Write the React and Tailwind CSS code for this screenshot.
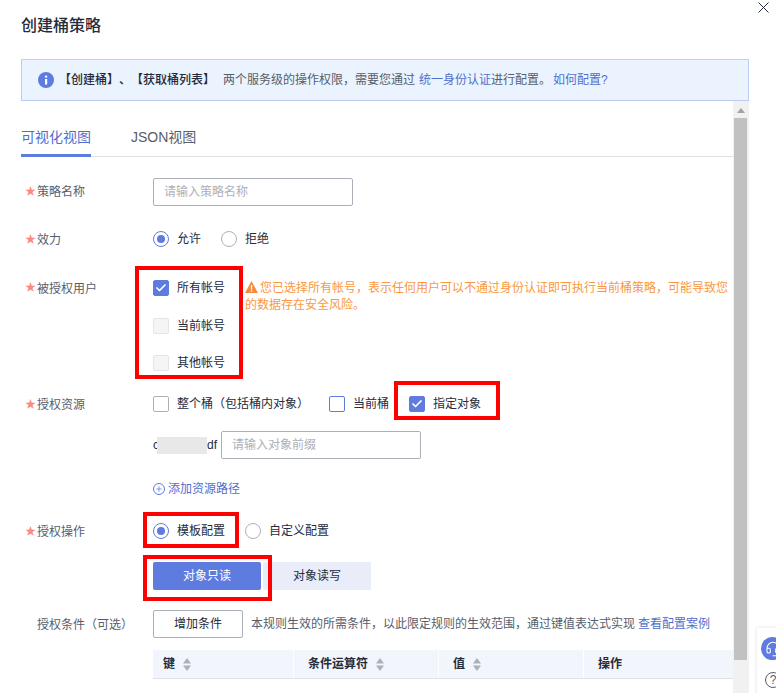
import React from 'react';
import { Check, Plus, Headset } from 'lucide-react';

const FONT = "font-['Liberation_Sans','Noto_Sans_CJK_SC',sans-serif]";

const Label = ({ children, required = true, className = 'items-center' }) => (
    <div className={`w-[132px] shrink-0 flex text-xs text-[#575d6c] ${className}`}>
        <span className={`w-4 pl-1 text-[11px] text-[#f88a80] ${required ? '' : 'invisible'}`}>★</span>
        <span className="pt-[1px]">{children}</span>
    </div>
);

const Radio = ({ checked, label }) => (
    <label className="flex items-center gap-2 text-xs text-[#252b3a]">
        <span className={`w-4 h-4 rounded-full border flex items-center justify-center bg-white ${checked ? 'border-[#5e7ce0]' : 'border-[#adb0b8]'}`}>
            {checked && <span className="w-2 h-2 rounded-full bg-[#5e7ce0]" />}
        </span>
        {label}
    </label>
);

const Checkbox = ({ checked, disabled, active, label }) => (
    <label className="flex items-center gap-2 text-xs text-[#252b3a]">
        <span
            className={`w-4 h-4 rounded-xs border flex items-center justify-center ${
                checked
                    ? 'bg-[#5e7ce0] border-[#5e7ce0]'
                    : disabled
                      ? 'bg-[#f5f5f6] border-[#e4e5e8]'
                      : active
                        ? 'bg-white border-[#5e7ce0]'
                        : 'bg-white border-[#adb0b8]'
            }`}
        >
            {checked && <Check size={12} strokeWidth={3.5} className="text-white" />}
        </span>
        {label}
    </label>
);

const TextInput = ({ placeholder }) => (
    <input
        placeholder={placeholder}
        className="w-[200px] h-7 px-[10px] text-xs border border-[#adb0b8] rounded-xs bg-white outline-none placeholder:text-[#adb0b8]"
    />
);

const SortIcon = () => (
    <svg width="8" height="13" viewBox="0 0 8 13" className="ml-2">
        <path d="M4 0 L8 5.5 L0 5.5 Z" fill="#adb0b8" />
        <path d="M0 7.5 L8 7.5 L4 13 Z" fill="#adb0b8" />
    </svg>
);

const RedBox = ({ className }) => (
    <div className={`absolute border-4 border-[#ff0000] pointer-events-none ${className}`} />
);

const columns = [
    { title: '键', className: 'w-[141px] pl-[10px]', sort: true },
    { title: '条件运算符', className: 'w-[145px] pl-[14px]', sort: true },
    { title: '值', className: 'w-[145px] pl-[14px]', sort: true },
    { title: '操作', className: 'flex-1 pl-[14px]', sort: false },
];

const App = () => {
    return (
        <div className={`relative w-[776px] h-[693px] overflow-hidden bg-white [text-spacing-trim:space-all] ${FONT}`}>
            {/* Close */}
            <button className="absolute top-[2px] left-[758px] text-[#252b3a]">
                <svg width="11" height="11" viewBox="0 0 11 11" fill="none" stroke="currentColor" strokeWidth="1">
                    <path d="M0.5 0.5 L10.5 10.5 M10.5 0.5 L0.5 10.5" />
                </svg>
            </button>

            {/* Title */}
            <h1 className="pl-[21px] pt-[16px] h-[59px] text-base leading-5 font-medium text-[#252b3a]">创建桶策略</h1>

            {/* Notice */}
            <div className="ml-[21px] w-[728px] h-[42px] flex items-center pl-4 text-xs bg-[#ebf4fe] border border-[#bccdf5] border-t-[#c5d0e8] text-[#575d6c]">
                <svg width="16" height="16" viewBox="0 0 16 16" className="shrink-0">
                    <circle cx="8" cy="8" r="8" fill="#5e7ce0" />
                    <rect x="7" y="7" width="2.2" height="5.5" fill="#fff" />
                    <circle cx="8.1" cy="4.6" r="1.2" fill="#fff" />
                </svg>
                <span className="ml-[5px] font-medium text-[#252b3a]">【创建桶】、【获取桶列表】</span>
                <span className="ml-[8px]">两个服务级的操作权限，需要您通过</span>
                <span className="ml-[4px] text-[#526ecc]">统一身份认证</span>
                <span>进行配置。</span>
                <span className="ml-[2px] text-[#526ecc]">如何配置?</span>
            </div>

            {/* Scroll area */}
            <div className="flex h-[592px] ml-[21px] w-[728px]">
                <div className="w-[712px] shrink-0 overflow-hidden">
                    {/* Tabs */}
                    <div className="flex h-[56px] border-b border-[#dfe1e6] items-end text-sm text-[#575d6c]">
                        <div className="h-[33px] w-[70px] pt-[3px] mb-[-1px] border-b-[3px] border-[#5e7ce0] text-[#526ecc]">可视化视图</div>
                        <div className="h-[33px] pt-[3px] mb-[-1px] ml-[40px]">JSON视图</div>
                    </div>

                    {/* 策略名称 */}
                    <div className="flex items-center mt-[21px] h-[27px]">
                        <Label>策略名称</Label>
                        <TextInput placeholder="请输入策略名称" />
                    </div>

                    {/* 效力 */}
                    <div className="flex items-center mt-[26px] h-4">
                        <Label>效力</Label>
                        <div className="flex gap-[20px]">
                            <Radio checked label="允许" />
                            <Radio label="拒绝" />
                        </div>
                    </div>

                    {/* 被授权用户 */}
                    <div className="flex mt-[33px]">
                        <Label className="items-start">被授权用户</Label>
                        <div className="flex flex-col gap-[22px] w-[92px] shrink-0">
                            <Checkbox checked label="所有帐号" />
                            <Checkbox disabled label="当前帐号" />
                            <div className="-mt-[1px]">
                                <Checkbox disabled label="其他帐号" />
                            </div>
                        </div>
                        <p className="w-[484px] text-xs leading-[17px] text-[#fa9841]">
                            <svg width="13" height="12" viewBox="0 0 13 12" className="inline align-[-1px] mr-[2px]">
                                <path d="M6.5 0 L13 12 L0 12 Z" fill="#f58b3c" />
                                <rect x="5.9" y="4" width="1.3" height="4.5" fill="#fff" />
                                <rect x="5.9" y="9.2" width="1.3" height="1.4" fill="#fff" />
                            </svg>
                            您已选择所有帐号，表示任何用户可以不通过身份认证即可执行当前桶策略，可能导致您的数据存在安全风险。
                        </p>
                    </div>

                    {/* 授权资源 */}
                    <div className="flex items-center mt-[25px] h-4">
                        <Label>授权资源</Label>
                        <Checkbox label="整个桶（包括桶内对象）" />
                        <div className="ml-[20px]">
                            <Checkbox active label="当前桶" />
                        </div>
                        <div className="ml-[20px]">
                            <Checkbox checked label="指定对象" />
                        </div>
                    </div>

                    <div className="flex items-center mt-[19px] ml-[132px] h-7 text-xs text-[#252b3a]">
                        <span className="w-[4px]">c</span>
                        <span className="w-[50px] h-[17px] bg-[#e8e8e8]" />
                        <span className="w-[14px]">df</span>
                        <TextInput placeholder="请输入对象前缀" />
                    </div>

                    <div className="flex items-center mt-[22px] ml-[132px] text-xs text-[#526ecc] h-4">
                        <span className="w-3 h-3 mr-[3px] rounded-full border border-[#5e7ce0] flex items-center justify-center">
                            <Plus size={8} strokeWidth={2} />
                        </span>
                        添加资源路径
                    </div>

                    {/* 授权操作 */}
                    <div className="flex items-center mt-[26px] h-4">
                        <Label>授权操作</Label>
                        <div className="flex gap-[20px]">
                            <Radio checked label="模板配置" />
                            <Radio label="自定义配置" />
                        </div>
                    </div>

                    <div className="flex mt-[23px] ml-[132px] h-7 text-xs gap-[2px]">
                        <div className="w-[108px] flex items-center justify-center rounded-xs bg-[#5e7ce0] text-white">对象只读</div>
                        <div className="w-[108px] flex items-center justify-center rounded-xs bg-[#e9edfa] text-[#252b3a]">对象读写</div>
                    </div>

                    {/* 授权条件 */}
                    <div className="flex items-center mt-[20px] h-7">
                        <Label required={false}>授权条件（可选）</Label>
                        <button className="w-[90px] h-7 border border-[#adb0b8] rounded-xs text-xs text-[#252b3a]">增加条件</button>
                        <span className="ml-2 text-xs text-[#575d6c] whitespace-nowrap">本规则生效的所需条件，以此限定规则的生效范围，通过键值表达式实现</span>
                        <span className="ml-[3px] text-xs text-[#526ecc] whitespace-nowrap">查看配置案例</span>
                    </div>

                    {/* Conditions table */}
                    <div className="flex mt-3 ml-[132px] h-[29px] bg-[#f2f5fc] border-b border-[#dfe1e6] text-xs font-semibold text-[#252b3a]">
                        {columns.map((col) => (
                            <div key={col.title} className={`${col.className} flex items-center border-r border-white last:border-r-0`}>
                                {col.title}
                                {col.sort && <SortIcon />}
                            </div>
                        ))}
                    </div>
                </div>

                {/* Scrollbar */}
                <div className="w-4 bg-[#f1f1f1] flex flex-col">
                    <svg width="8" height="5" viewBox="0 0 8 5" className="mt-[7px] ml-1">
                        <path d="M4 0 L8 5 L0 5 Z" fill="#a3a3a3" />
                    </svg>
                    <div className="w-[13px] h-[542px] ml-[1px] mt-[5px] bg-[#c1c1c1]" />
                </div>
            </div>

            {/* Annotations */}
            <RedBox className="left-[135px] top-[266px] w-[108px] h-[113px]" />
            <RedBox className="left-[394px] top-[381px] w-[106px] h-[39px]" />
            <RedBox className="left-[143px] top-[512px] w-[96px] h-[36px]" />
            <RedBox className="left-[143px] top-[555px] w-[129px] h-[46px]" />

            {/* Floating help widget */}
            <div className="absolute left-[757px] top-[628px] w-[30px] h-[80px] bg-white shadow-[0_0_4px_rgba(0,0,0,0.12)]">
                <div className="absolute left-[4px] top-[9px] w-[23px] h-[23px] rounded-full bg-[#5e7ce0] flex items-center justify-center">
                    <Headset size={16} strokeWidth={1.6} className="text-white" />
                </div>
                <div className="absolute left-[8px] top-[44px] w-4 h-4 rounded-full border border-[#575d6c] flex items-center justify-center text-xs text-[#575d6c]">?</div>
            </div>
        </div>
    );
};

export default App;
